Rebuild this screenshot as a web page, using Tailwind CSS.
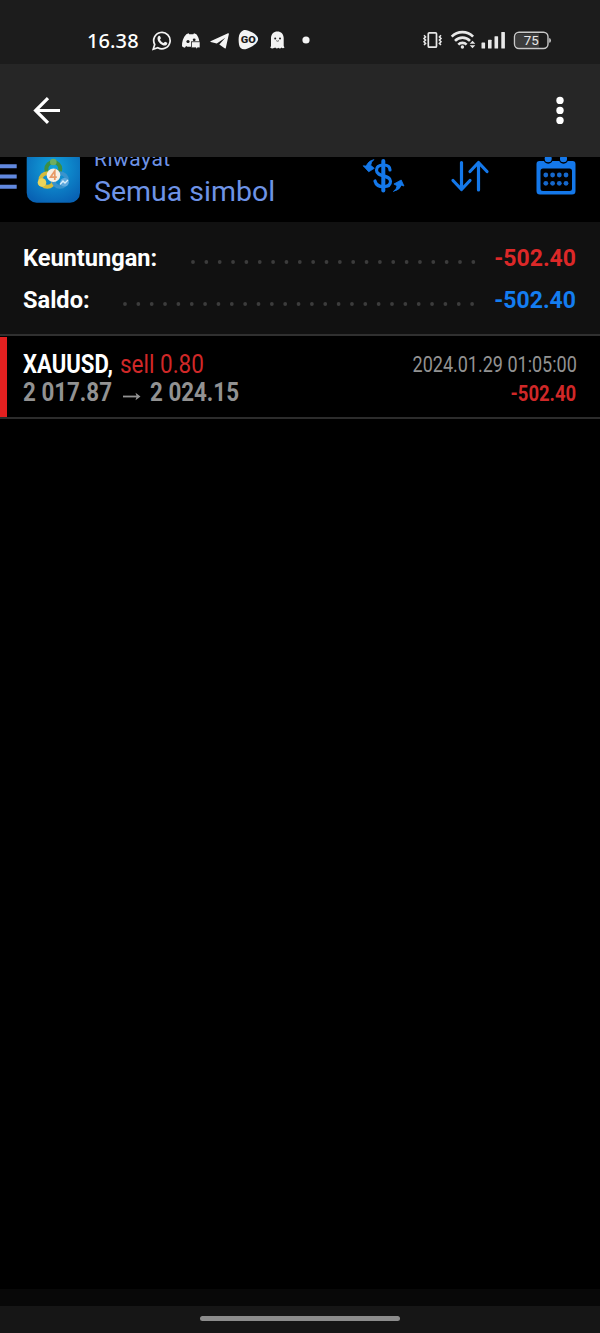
<!DOCTYPE html>
<html lang="id">
<head>
<meta charset="utf-8">
<title>Riwayat</title>
<script src="https://cdn.jsdelivr.net/npm/@tailwindcss/browser@4"></script>
</head>
<body class="bg-black">
<div class="flex h-[1333px] w-[600px] flex-col overflow-hidden bg-black font-['Roboto',sans-serif] text-white">

  <!-- status bar -->
  <div class="flex h-16 shrink-0 bg-[#1c1c1c] pt-5 pl-[87px]">
    <div class="flex h-10 w-[65px] items-center pt-0.5"><span class="origin-left whitespace-nowrap font-['Noto_Sans',sans-serif] text-[20px] font-medium leading-none tracking-[0.1px]">16.38</span></div>
    <svg class="h-10 w-[168px]" viewBox="152 20 168 40" fill="#f4f4f4">
      <path d="M153.200 49.300l1.500-4.800a8.200 8.200 0 1 1 3.100 3.200z" fill="none" stroke="#f4f4f4" stroke-width="1.700"/>
      <path d="M158.400 36.200c.6-.6 1.500-.5 1.800.2l.7 1.700c.1.500-.7 1.200-.9 1.600.8 1.600 1.900 2.600 3.600 3.300.6-.3 1.100-1.300 1.600-1.200l2 1c.4.500-.1 2.200-1.700 2.700-2.700.8-8-3.200-8-7.100 0-1 .4-1.800.9-2.200z"/>
      <path d="M186.300 34.200l2.300-1 .7 1.100h4l.7-1.100 2.400 1c1.700 2.200 2.700 4.600 2.900 7.300h-8.300v5.200h-3.600l-1.300-.7-1.200 1.700c-1.100-.2-2-.7-2.900-1.400-.2-4.700 1.200-9 4.300-12.100z"/>
      <circle cx="188" cy="41.500" r="1.600" fill="#1c1c1c"/><circle cx="194.200" cy="39.800" r="1.400" fill="#1c1c1c"/>
      <path d="M191.500 41.800h8.500v5.900h-2.500l-1.500 1.500v-1.500h-4.500z" stroke="#1c1c1c" stroke-width=".6"/>
      <path d="M210.500 41.300L228 33.200c.6-.2 1 .1.900.7l-3.100 14c-.2.600-.7.700-1.200.400l-5.300-3.800 6-6.700-8.500 5.600-6.100-1.500c-.5-.2-.5-.500-.2-.6z"/>
      <path d="M241 32c3-3.500 6.500-2 11 .2 4.500 2.500 7.500 5.500 5.500 9-2 3.500-5 5.500-10.500 7.500-4 1.500-7.500 0-8-4.200-.8-5-.5-10 2-12.500z"/>
      <text x="248.200" y="43.400" text-anchor="middle" fill="#1c1c1c" class="font-['Roboto',sans-serif] text-[9.5px] font-black" textLength="15" lengthAdjust="spacingAndGlyphs">GO</text>
      <path d="M271 46V38c0-3.800 2.700-6.500 6.400-6.500s6.300 2.700 6.300 6.500v8l.8 1.400c-1 1.200-2.300.9-3 .2-.8 1.100-2.400 1.100-3.200.1-.7 1-2.200 1-3-.1-1.200.8-3.500 1.300-5 .2z"/>
      <circle cx="275.200" cy="38.600" r="1" fill="#1c1c1c"/><circle cx="280" cy="38.600" r="1" fill="#1c1c1c"/><path d="M276.200 40.700q1.400 1 2.800 0" stroke="#1c1c1c" stroke-width=".7" fill="none"/>
      <circle cx="306" cy="40" r="3.600"/>
    </svg>
    <svg class="ml-[95px] h-10 w-[145px]" viewBox="415 20 145 40" fill="#e8e8e8">
      <rect x="428.300" y="32.800" width="8.200" height="14.400" rx="1" fill="none" stroke="#e8e8e8" stroke-width="1.700"/>
      <path d="M424 35.200l1.600 1.700-1.600 1.600 1.600 1.600-1.600 1.700 1.600 1.600-1.600 1.600M441 35.200l-1.600 1.700 1.600 1.600-1.600 1.600 1.600 1.700-1.600 1.600 1.600 1.600" fill="none" stroke="#e8e8e8" stroke-width="1.500"/>
      <g fill="none" stroke="#e8e8e8" stroke-width="2.600"><path d="M451.700 36.600a15 15 0 0 1 21.400 0M455 40.800a10.500 10.500 0 0 1 15 0M458.300 44.600a5.800 5.800 0 0 1 8.300 0"/></g>
      <circle cx="462.400" cy="47" r="1.700"/><path d="M469.700 43.700l2.800-3 2.800 3zM469.700 45.300l2.800 3 2.800-3z"/>
      <rect x="481.500" y="42.500" width="3.600" height="6" rx=".6"/><rect x="488" y="39.700" width="3.600" height="8.800" rx=".6"/><rect x="494.500" y="36.200" width="3.600" height="12.300" rx=".6"/><rect x="501.300" y="32" width="3.600" height="16.500" rx=".6"/>
      <path d="M519 33.500h20v14h-20a3.500 3.500 0 0 1-3.500-3.500v-7a3.500 3.500 0 0 1 3.500-3.500z" fill="#3c3c3c"/>
      <rect x="514.500" y="32.300" width="33.500" height="16.200" rx="4.500" fill="none" stroke="#c9c9c9" stroke-width="1.400"/>
      <path d="M549.300 38q1.500.3 1.500 2.400t-1.500 2.400z"/>
      <text x="531.300" y="45.200" text-anchor="middle" class="font-['Roboto',sans-serif] text-[13.5px]" textLength="15" lengthAdjust="spacingAndGlyphs">75</text>
    </svg>
  </div>

  <!-- viewer bar -->
  <div class="flex h-[93px] shrink-0 items-center justify-between bg-[#262626] pr-[35px] pb-px pl-8">
    <svg class="h-[30px] w-[30px]" viewBox="32 95 30 30" fill="none" stroke="#fff" stroke-width="3.200"><path d="M60 110.500H35.500M48 98.200L35.600 110.500 48 122.800"/></svg>
    <svg class="h-[30px] w-[10px]" viewBox="555 95 10 30" fill="#fff"><circle cx="560" cy="100.400" r="3.700"/><circle cx="560" cy="110.400" r="3.700"/><circle cx="560" cy="120.400" r="3.700"/></svg>
  </div>

  <!-- app header, scrolled under the viewer bar -->
  <div class="flex h-[65px] shrink-0 overflow-hidden">
    <svg class="h-[65px] w-[93px] shrink-0" viewBox="0 157 93 65">
      <defs>
        <radialGradient id="tile" cx=".5" cy=".35" r=".7"><stop offset="0" stop-color="#12a4dc"/><stop offset="1" stop-color="#0862b4"/></radialGradient>
      </defs>
      <path d="M0 164.300h16.700v4H0zM0 174.500h16.700v4H0zM0 184.700h16.700v4H0z" fill="#6188de"/>
      <rect x="26.700" y="149" width="53.300" height="53.700" rx="10" fill="url(#tile)"/>
      <g stroke-width="4" fill="none">
        <circle cx="53.300" cy="169" r="7" stroke="#3c8f45"/>
        <circle cx="47.300" cy="180" r="6.800" stroke="#d3bb3c"/>
        <circle cx="60" cy="180" r="6.800" stroke="#3a93cc"/>
      </g>
      <circle cx="53.300" cy="162" r="3.300" fill="#6fae60"/><circle cx="42" cy="182.500" r="4.300" fill="#ead45b"/><circle cx="64.500" cy="182.300" r="4.300" fill="#5fa9dd"/>
      <path d="M60 184.500l3-3.500 2 2 3-3" stroke="#d9effb" stroke-width="1.300" fill="none"/>
      <circle cx="53.500" cy="175.300" r="6.800" fill="#f6efe2"/>
      <path d="M54.800 180v-9l-4.300 6.200h6.300" fill="none" stroke="#e89a66" stroke-width="1.700"/>
    </svg>
    <div class="-mt-2 w-[260px] pl-px text-[#6e93e6]">
      <div class="h-[23px] pt-px text-[21px] leading-[19px] tracking-[0.5px]">Riwayat</div>
      <div class="h-10 whitespace-nowrap text-[28.5px] leading-10">Semua simbol</div>
    </div>
    <svg class="h-[65px] w-[247px] shrink-0" viewBox="353 157 247 65" fill="none" stroke="#1478ea" stroke-width="3.200" stroke-linecap="round" stroke-linejoin="round">
      <path d="M383.300 161v29.500" stroke-width="4"/>
      <path d="M390 170c0-3.500-2.500-5-6.500-5s-7 1.500-7 5.300c0 7 14 4.200 14 11 0 3.700-3 5.400-7 5.400s-7.500-1.700-8.500-5.700"/>
      <path d="M373.500 159.800q-2.500 2-2.800 5.500l3.600 3-5.600 3.500-5.500-6 3 .3q2.200-5.300 7.300-6.300z" fill="#1478ea" stroke-width=".8"/>
      <path d="M393.800 191.300q3-2.500 3.300-5.500l-3.200-1.800 7.300-4 2.800 6-2.600-.8q-2 5-7.600 6.100z" fill="#1478ea" stroke-width=".8"/>
      <path d="M461.500 162.500v27M453 180.500l8.500 9 8.500-9M478.500 190v-27M470 171.500l8.500-9 8.500 9"/>
      <path fill="#1478ea" stroke="none" fill-rule="evenodd" d="M539.500 161h33a3 3 0 0 1 3 3v27a3.500 3.500 0 0 1-3.500 3.500h-32a3.500 3.500 0 0 1-3.500-3.500v-27a3 3 0 0 1 3-3zM543 168.500a2.500 2.500 0 0 0-2.500 2.500v17.500a2.500 2.500 0 0 0 2.500 2.500h26.500a2.500 2.500 0 0 0 2.500-2.500V171a2.500 2.500 0 0 0-2.500-2.500z"/>
      <g fill="#1478ea" stroke="#000" stroke-width="1.300"><circle cx="548.200" cy="158.800" r="4.200"/><circle cx="563.500" cy="158.800" r="4.200"/></g>
      <g fill="#1668cc" stroke="none"><circle cx="545.800" cy="175" r="2.400"/><circle cx="552.600" cy="175" r="2.400"/><circle cx="559.300" cy="175" r="2.400"/><circle cx="566" cy="175" r="2.400"/><circle cx="545.800" cy="183.300" r="2.400"/><circle cx="552.600" cy="183.300" r="2.400"/><circle cx="559.300" cy="183.300" r="2.400"/><circle cx="566" cy="183.300" r="2.400"/></g>
    </svg>
  </div>

  <!-- totals -->
  <div class="h-[114px] shrink-0 border-b-2 border-[#303030] bg-[#111] pt-4 pr-6 pl-[23px] text-[23px] font-bold">
    <div class="flex h-[42px] items-center">
      <div class="w-[168px]"><span class="inline-block origin-left scale-x-[1.025] whitespace-nowrap">Keuntungan:</span></div>
      <svg class="mt-1.5 h-1 w-[286px]" viewBox="0 0 286 4"><path d="M2 2H284" stroke="#3c3c3c" stroke-width="3.800" stroke-linecap="round" stroke-dasharray="0 13.350"/></svg>
      <div class="flex flex-1 justify-end text-[#dc2828]"><span class="whitespace-nowrap">-502.40</span></div>
    </div>
    <div class="flex h-[42px] items-center">
      <div class="w-[100px]"><span class="inline-block origin-left scale-x-[1.025] whitespace-nowrap">Saldo:</span></div>
      <svg class="mt-1.5 h-1 w-[354px]" viewBox="0 0 354 4"><path d="M2 2H350" stroke="#3c3c3c" stroke-width="3.800" stroke-linecap="round" stroke-dasharray="0 13.350"/></svg>
      <div class="flex flex-1 justify-end text-[#147df0]"><span class="whitespace-nowrap">-502.40</span></div>
    </div>
  </div>

  <!-- deal -->
  <div class="flex h-[83px] shrink-0 border-b-2 border-[#2c2c2c] pt-px">
    <div class="h-20 w-[7px] bg-[#e22020]"></div>
    <div class="flex flex-1 flex-col pt-[13px] pr-[23.5px] pl-4">
      <div class="flex h-7 items-center justify-between whitespace-nowrap">
        <div class="flex w-[250px] text-[26px] leading-7"><div class="w-[96.5px]"><span class="inline-block origin-left scale-x-[0.85] font-bold">XAUUSD,</span></div><span class="inline-block origin-left scale-x-[0.865] text-[#d02828]">sell 0.80</span></div>
        <div class="flex w-[200px] justify-end pt-0.5"><span class="origin-right scale-x-[0.818] text-[22px] leading-7 text-[#929292]">2024.01.29 01:05:00</span></div>
      </div>
      <div class="flex h-7 items-center justify-between whitespace-nowrap font-bold">
        <div class="flex text-[26px] leading-7 text-[#929292]"><div class="w-[99px]"><span class="inline-block origin-left scale-x-[0.86]">2 017.87</span></div><svg class="mt-3.5 mr-2 h-[9px] w-5" viewBox="0 0 20 9"><path d="M1 4.500h14" stroke="#929292" stroke-width="1.800"/><path d="M13.500 .7l5 3.800-5 3.800 1.200-3.800z" fill="#929292"/></svg><span class="inline-block origin-left scale-x-[0.86]">2 024.15</span></div>
        <span class="origin-right scale-x-[0.84] pt-[3px] text-[22px] leading-7 text-[#d02828]">-502.40</span>
      </div>
    </div>
  </div>

  <div class="flex-1"></div>
  <div class="h-[17px] shrink-0 bg-[#080808]"></div>
  <div class="flex h-[27px] shrink-0 justify-center bg-[#161616] pt-2.5"><div class="h-[5px] w-[200px] rounded-full bg-[#8c8c8c]"></div></div>
</div>
</body>
</html>
